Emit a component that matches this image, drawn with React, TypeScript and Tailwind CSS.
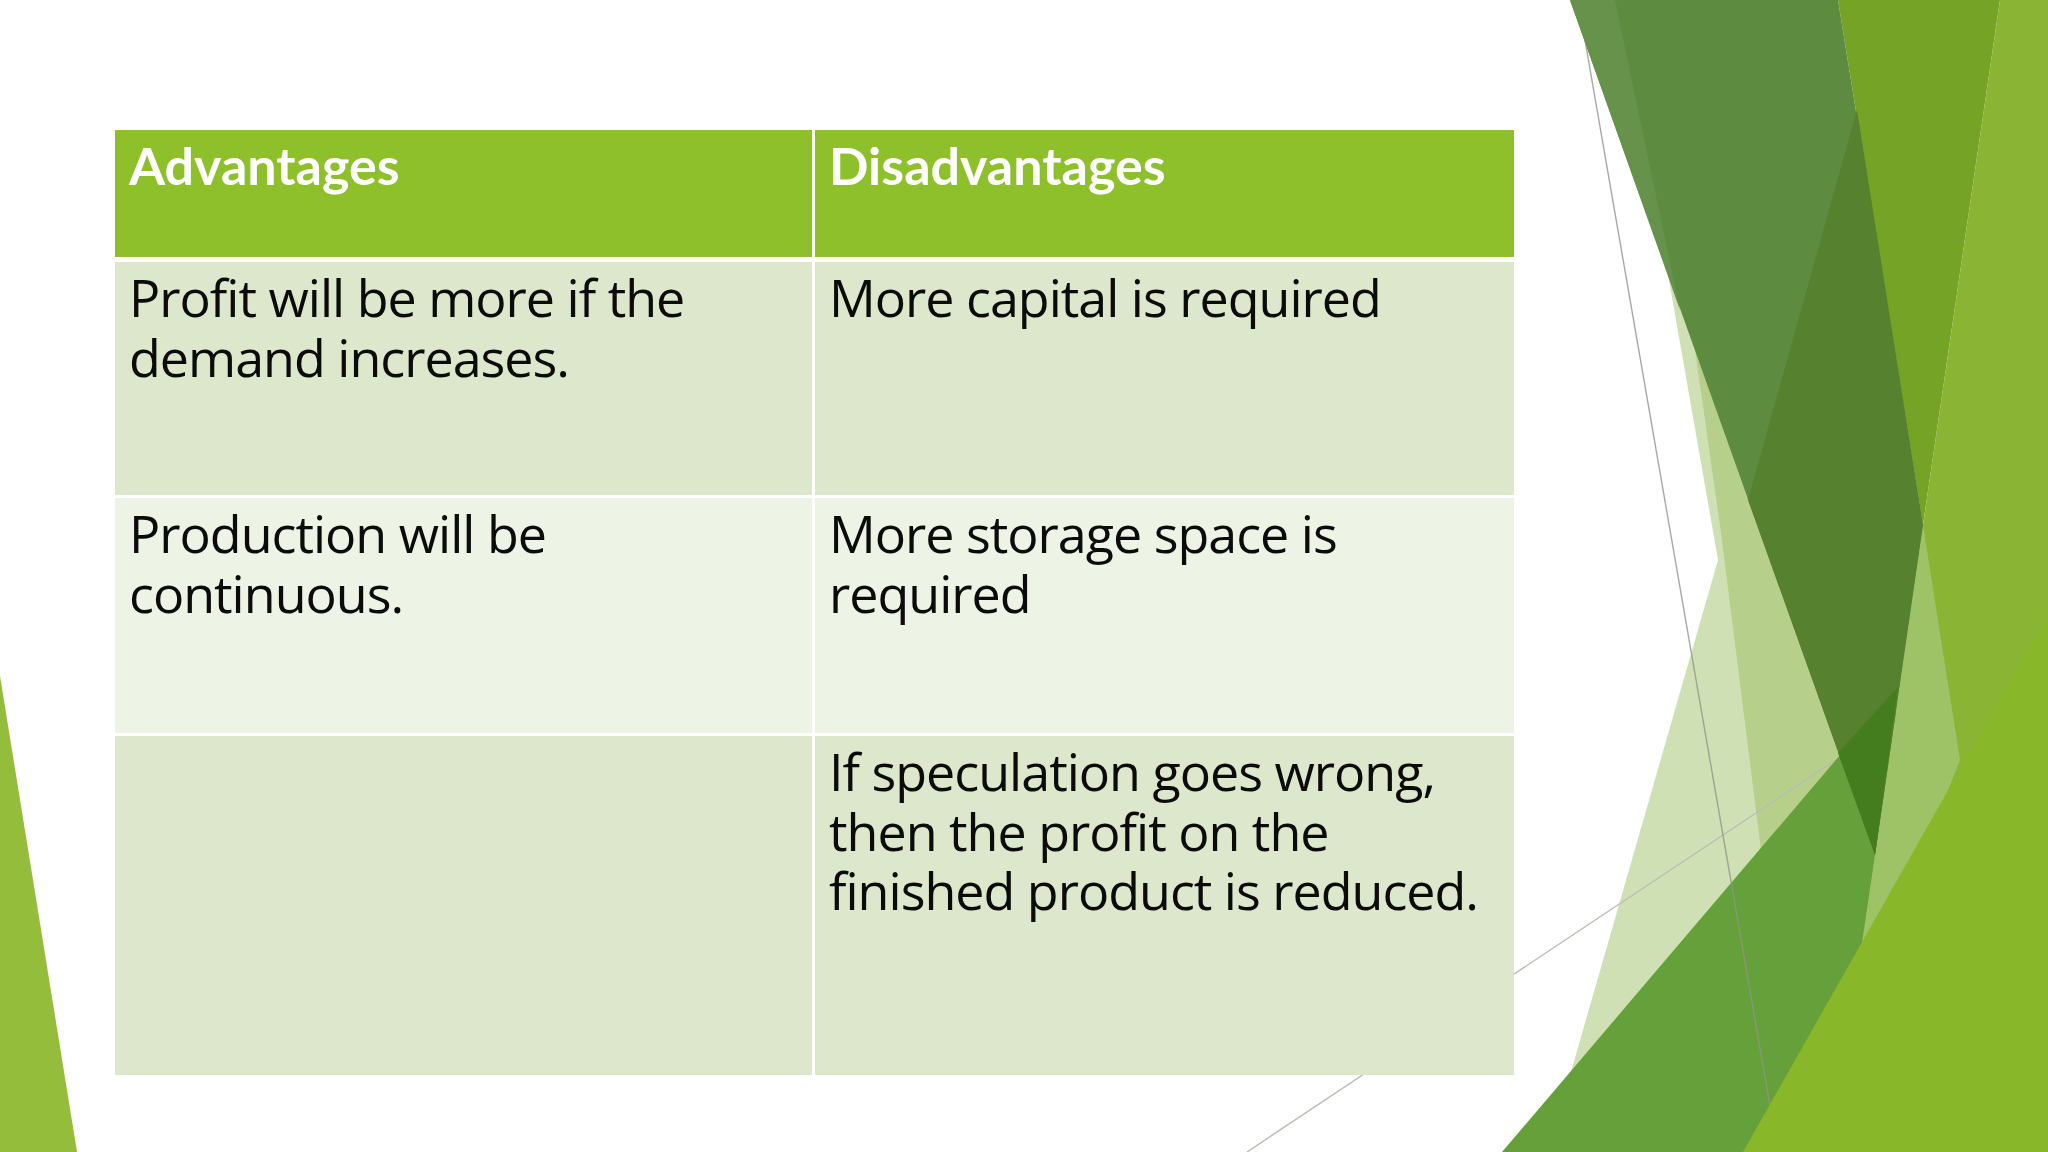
import { Fragment } from "react";

const rows = [
  {
    bg: "bg-[#dce7cb]",
    h: "h-[233px]",
    mt: "mt-[5px]",
    left: ["Profit will be more if the", "demand increases."],
    right: ["More capital is required"],
  },
  {
    bg: "bg-[#edf3e5]",
    h: "h-[235px]",
    mt: "mt-[3px]",
    left: ["Production will be", "continuous."],
    right: ["More storage space is", "required"],
  },
  {
    bg: "bg-[#dce7cb]",
    h: "h-[339px]",
    mt: "mt-[3px]",
    left: [],
    right: ["If speculation goes wrong,", "then the profit on the", "finished product is reduced."],
  },
];

const Lines = ({ lines }: { lines: string[] }) => (
  <p className="whitespace-nowrap">
    {lines.map((l, i) => (
      <Fragment key={i}>
        {i > 0 && <br />}
        {l}
      </Fragment>
    ))}
  </p>
);

const Backdrop = () => (
  <svg
    className="absolute inset-0 h-full w-full"
    viewBox="0 0 2048 1152"
    preserveAspectRatio="none"
  >
    {/* left wedge */}
    <polygon points="0,676 0,1152 77,1152" fill="#93bd3b" />

    {/* pale shapes */}
    <polygon points="1655,200 1718,560 1548,1152 1780,1152 1880,760 1760,400" fill="#d0e0b5" />
    <polygon points="1695,350 1860,760 1761,850 1721,533" fill="#b6d08c" />

    {/* thin guide lines */}
    <line x1="1247" y1="1152" x2="1840" y2="757" stroke="#b9bdb4" strokeWidth="1.4" />

    {/* mid green band */}
    <polygon points="1502,1152 1898,687 1880,945 1820,1152" fill="#66a03a" />
    <line x1="1578" y1="0" x2="1778" y2="1152" stroke="#8f958a" strokeWidth="1.4" strokeOpacity="0.8" />

    {/* right strips, reaching under the bright corner */}
    <polygon points="1838,0 2000,0 1923,525" fill="#75a326" />
    <polygon points="2000,0 2048,0 2048,720 1900,900 1923,525" fill="#89b434" />
    <polygon points="1923,525 1960,760 1905,900 1855,990 1875,855" fill="#9dc366" />

    {/* dark green blade */}
    <polygon points="1570,0 1838,0 1923,525 1875,855" fill="#5d8b40" />
    <polygon points="1570,0 1615,0 1680,310" fill="#66924c" />
    <polygon points="1857,110 1923,525 1875,855 1748,500" fill="#56812f" />
    <polygon points="1838,753 1898,687 1875,855" fill="#437d1e" />

    {/* bright corner */}
    <polygon points="2048,614 2048,1152 1743,1152" fill="#88b82a" />
  </svg>
);

const head =
  "bg-[#8dc02b] px-[14px] pt-[5px] font-['Lato',sans-serif] text-[52px] font-bold leading-[60px] text-white";
const cell =
  "px-[14px] pt-[5px] font-['Open_Sans',sans-serif] text-[52px] leading-[59.5px] tracking-[-1px] text-[#0b0b0b]";

export default function App() {
  return (
    <div className="relative h-[1152px] w-[2048px] overflow-hidden bg-white">
      <Backdrop />
      <div className="relative z-10 pl-[115px] pt-[130px]">
        <div className="flex w-[1399px] flex-col">
          <div className="grid h-[127px] grid-cols-[697px_699px] gap-x-[3px]">
            <div className={head}>Advantages</div>
            <div className={head}>Disadvantages</div>
          </div>
          {rows.map((r, i) => (
            <div
              key={i}
              className={`grid grid-cols-[697px_699px] gap-x-[3px] ${r.h} ${r.mt}`}
            >
              <div className={`${r.bg} ${cell}`}>
                <Lines lines={r.left} />
              </div>
              <div className={`${r.bg} ${cell}`}>
                <Lines lines={r.right} />
              </div>
            </div>
          ))}
        </div>
      </div>
    </div>
  );
}
